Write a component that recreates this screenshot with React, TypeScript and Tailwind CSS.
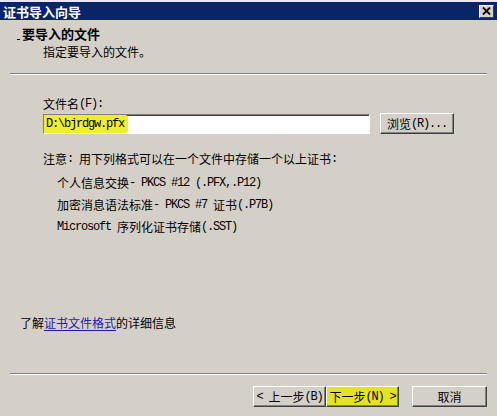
import React from 'react';

const cjk = "font-['Noto_Sans_CJK_SC','Liberation_Sans',sans-serif]";
const mono = "font-['Liberation_Mono','Noto_Sans_CJK_SC',monospace] text-[12px] tracking-[-1.2px] leading-[16px]";

// classic win32 raised button
const btn =
  'h-[21px] flex items-center justify-center text-[12px] text-black border border-t-white border-l-white border-r-[#404040] border-b-[#404040] shadow-[inset_-1px_-1px_0_#808080]';

const row = 'h-[16px] flex items-center text-[12px] leading-[16px] whitespace-pre';

const Mono: React.FC<{ children: React.ReactNode }> = ({ children }) => (
  <span className={`${mono} whitespace-pre`}>{children}</span>
);

const App: React.FC = () => {
  return (
    <div className={`w-[497px] h-[416px] bg-[#d4d0c8] flex flex-col overflow-hidden ${cjk} text-black`}>
      {/* Title bar */}
      <div className="border-t-2 border-[#e9e9e9]">
        <div className="h-[18px] bg-[#0a246a] flex items-center justify-between pl-[3px] pr-[3px]">
          <span className="text-white font-bold text-[13px] leading-none">证书导入向导</span>
          <button className="w-[15px] h-[13px] bg-[#d4d0c8] border border-t-white border-l-white border-r-[#404040] border-b-[#404040] flex items-center justify-center">
            <svg width="9" height="8" viewBox="0 0 9 8">
              <path d="M1 0.5 L8 7.5 M8 0.5 L1 7.5" stroke="#000" strokeWidth="1.8" />
            </svg>
          </button>
        </div>
      </div>

      {/* Header */}
      <div className="h-[53px] pt-[6px]">
        <div className="flex items-end pl-[17px] h-[16px]">
          <span className="w-[3px] h-[1px] bg-black mb-[2px] mr-[2px]" />
          <span className="text-[13px] font-bold leading-[16px]">要导入的文件</span>
        </div>
        <div className="mt-[2px] pl-[43px] text-[12px] leading-[16px]">指定要导入的文件。</div>
      </div>
      <div className="ml-[10px] w-[477px] border-t border-t-[#808080] border-b border-b-white" />

      {/* Body */}
      <div className="flex-1 flex flex-col">
        <div className={`${row} mt-[21px] pl-[43px]`}>
          文件名<Mono>(F):</Mono>
        </div>
        <div className="mt-[1px] pl-[43px] flex items-center gap-[10px]">
          <div className="w-[327px] h-[20px] bg-white border border-t-[#808080] border-l-[#808080] border-r-white border-b-white shadow-[inset_1px_1px_0_#404040] flex">
            <span className={`${mono} h-full flex items-center bg-[#eeee2a] pl-[2px] pr-[4px] rounded-r-[3px]`}>
              D:\bjrdgw.pfx
            </span>
          </div>
          <button className={`${btn} w-[74px] h-[20px] border-black shadow-[inset_-1px_-1px_0_#808080,inset_1px_1px_0_#ffffff]`}>
            浏览<Mono>(R)...</Mono>
          </button>
        </div>

        <div className={`${row} mt-[17px] pl-[43px]`}>
          注意<Mono>: </Mono>用下列格式可以在一个文件中存储一个以上证书<Mono>:</Mono>
        </div>
        <div className="mt-[8px] pl-[57px] flex flex-col gap-[6px]">
          <div className={row}>
            个人信息交换<Mono>- PKCS #12 (.PFX,.P12)</Mono>
          </div>
          <div className={row}>
            加密消息语法标准<Mono>- PKCS #7 </Mono>证书<Mono>(.P7B)</Mono>
          </div>
          <div className={row}>
            <Mono>Microsoft </Mono>序列化证书存储<Mono>(.SST)</Mono>
          </div>
        </div>

        <div className="mt-auto mb-[42px] pl-[20px] text-[12px] leading-[16px]">
          了解<a className="text-[#1c1ca8] underline underline-offset-2">证书文件格式</a>的详细信息
        </div>
      </div>

      {/* Footer */}
      <div className="ml-[10px] w-[477px] border-t border-t-[#808080] border-b border-b-white" />
      <div className="mt-[11px] mb-[9px] flex justify-end pr-[10px]">
        <button className={`${btn} w-[73px]`}>
          <Mono>&lt; </Mono>上一步<Mono>(B)</Mono>
        </button>
        <button className={`${btn} w-[73px] bg-[#e4e41e]`}>
          下一步<Mono>(N) &gt;</Mono>
        </button>
        <button className={`${btn} w-[75px] ml-[13px]`}>取消</button>
      </div>
    </div>
  );
};

export default App;
